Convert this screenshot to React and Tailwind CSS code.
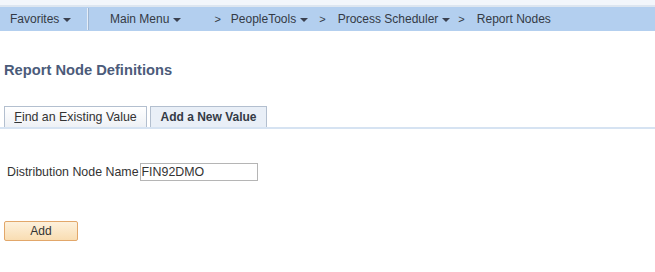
export default function App() {
  const arrow = (
    <svg className="ml-[4px] mt-[2px]" width="8" height="4" viewBox="0 0 8 4">
      <polygon points="0,0 8,0 4,4" fill="#3b4150" />
    </svg>
  )

  return (
    <div className="w-[655px] h-[272px] bg-white font-['Liberation_Sans',Arial,sans-serif] text-[12px] text-[#333]">
      <div className="h-[5px] bg-[#f2f6fb]" />
      <div className="h-[2px] bg-[#dde6f0]" />
      <div className="flex h-[24px] items-center bg-[#b3cfef] text-[#333a45]">
        <div className="flex h-full w-[87px] items-center pl-[10px]">
          Favorites
          {arrow}
        </div>
        <div className="h-[22px] w-[2px] border-l border-[#e6eef8] bg-[#9fb6d1]" />
        <div className="flex items-center pl-[21px]">
          Main Menu
          {arrow}
          <span className="ml-[33px] mr-[10px] text-[11px]">&gt;</span>
          PeopleTools
          {arrow}
          <span className="ml-[11px] mr-[12px] text-[11px]">&gt;</span>
          Process Scheduler
          {arrow}
          <span className="ml-[8px] mr-[12px] text-[11px]">&gt;</span>
          Report Nodes
        </div>
      </div>

      <h1 className="ml-[4px] mt-[31px] text-[14.7px] leading-[17px] font-bold text-[#4b5b7a]">Report Node Definitions</h1>

      <div className="mt-[27px] flex items-end gap-[3px] border-b-[2px] border-[#d6e3f2] pl-[4px]">
        <div className="flex h-[21px] w-[143px] items-center justify-center border border-b-0 border-[#b3bfcf] bg-gradient-to-b from-white to-[#eef1f5] text-[12.4px] text-[#333]">
          <span><span className="underline">F</span>ind an Existing Value</span>
        </div>
        <div className="flex h-[21px] w-[117px] items-center justify-center border border-b-0 border-[#b3bfcf] bg-[#e9eff7] font-bold text-[#333a45]">
          Add a New Value
        </div>
      </div>

      <div className="mt-[34px] flex h-[18px] items-center pl-[7px]">
        <span className="text-[12.4px]">Distribution Node Name</span>
        <div className="ml-[1px] flex h-[18px] w-[118px] items-center border border-[#b5b5b5] bg-white pl-[1px] text-[12.4px] text-[#333]">
          FIN92DMO
        </div>
      </div>

      <button className="ml-[4px] mt-[40px] flex h-[20px] w-[74px] items-center justify-center rounded-[2px] border border-[#e2a76a] bg-gradient-to-b from-[#fdf1dc] to-[#f9ddb2] text-[12px] text-[#333]">
        Add
      </button>
    </div>
  )
}
